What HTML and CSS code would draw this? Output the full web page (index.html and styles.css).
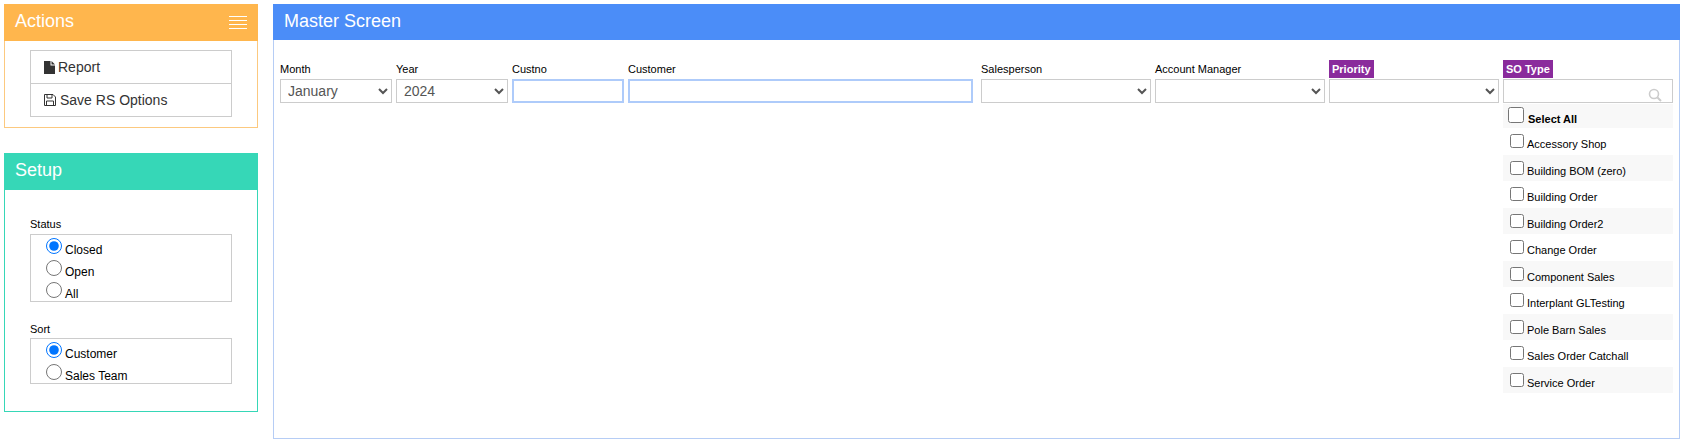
FILE: index.html
```html
<!DOCTYPE html>
<html lang="en">
<head>
<meta charset="utf-8">
<title>Master Screen</title>
<link rel="stylesheet" href="styles.css">
</head>
<body>
<div class="page">
  <aside class="side">
    <section class="panel panel-actions">
      <header class="panel-head">
        <h2>Actions</h2>
        <span class="burger"><i></i><i></i><i></i><i></i></span>
      </header>
      <div class="panel-body">
        <ul class="menu">
          <li>
            <svg class="ic" width="11" height="13" viewBox="0 0 11 13"><path fill="#333" d="M0 0h6.500v4.500H11V13H0z"/><path fill="#333" d="M7.500 0L11 3.500H7.500z"/></svg>
            <span>Report</span>
          </li>
          <li class="save">
            <svg class="ic" width="12" height="12" viewBox="0 0 12 12"><path fill="none" stroke="#333" d="M.5.5h8.500l2.500 2.500v8.500H.5z"/><path fill="none" stroke="#333" d="M3 .5v3.500h5V.5M2.500 11.500V7h7v4.500"/></svg>
            <span>Save RS Options</span>
          </li>
        </ul>
      </div>
    </section>
    <section class="panel panel-setup">
      <header class="panel-head"><h2>Setup</h2></header>
      <div class="panel-body setup-body">
        <div class="group group-first">
          <div class="group-label">Status</div>
          <div class="radio-box box-status">
            <label class="radio"><input type="radio" name="status" checked><span>Closed</span></label>
            <label class="radio"><input type="radio" name="status"><span>Open</span></label>
            <label class="radio"><input type="radio" name="status"><span>All</span></label>
          </div>
        </div>
        <div class="group">
          <div class="group-label">Sort</div>
          <div class="radio-box box-sort">
            <label class="radio"><input type="radio" name="sort" checked><span>Customer</span></label>
            <label class="radio"><input type="radio" name="sort"><span>Sales Team</span></label>
          </div>
        </div>
      </div>
    </section>
  </aside>
  <main class="panel panel-main">
    <header class="panel-head"><h2>Master Screen</h2></header>
    <div class="filters">
      <div class="field f-small">
        <label class="field-label">Month</label>
        <select class="ctl"><option>January</option></select>
      </div>
      <div class="field f-small">
        <label class="field-label">Year</label>
        <select class="ctl"><option>2024</option></select>
      </div>
      <div class="field f-small">
        <label class="field-label">Custno</label>
        <input class="ctl txt" type="text">
      </div>
      <div class="field f-cust">
        <label class="field-label">Customer</label>
        <input class="ctl txt" type="text">
      </div>
      <div class="field f-wide">
        <label class="field-label">Salesperson</label>
        <select class="ctl"><option></option></select>
      </div>
      <div class="field f-wide">
        <label class="field-label">Account Manager</label>
        <select class="ctl"><option></option></select>
      </div>
      <div class="field f-wide">
        <label class="field-label"><span class="tag">Priority</span></label>
        <select class="ctl"><option></option></select>
      </div>
      <div class="field f-wide">
        <label class="field-label"><span class="tag">SO Type</span></label>
        <div class="search">
          <svg class="search-ic" width="14" height="14" viewBox="0 0 14 14"><circle cx="6" cy="6" r="4.500" fill="none" stroke="#ccc" stroke-width="1.600"/><path d="M9.500 9.500L13 13" stroke="#ccc" stroke-width="2"/></svg>
        </div>
        <ul class="checks">
          <li class="all"><label><input type="checkbox"><span>Select All</span></label></li>
          <li><label><input type="checkbox"><span>Accessory Shop</span></label></li>
          <li><label><input type="checkbox"><span>Building BOM (zero)</span></label></li>
          <li><label><input type="checkbox"><span>Building Order</span></label></li>
          <li><label><input type="checkbox"><span>Building Order2</span></label></li>
          <li><label><input type="checkbox"><span>Change Order</span></label></li>
          <li><label><input type="checkbox"><span>Component Sales</span></label></li>
          <li><label><input type="checkbox"><span>Interplant GLTesting</span></label></li>
          <li><label><input type="checkbox"><span>Pole Barn Sales</span></label></li>
          <li><label><input type="checkbox"><span>Sales Order Catchall</span></label></li>
          <li><label><input type="checkbox"><span>Service Order</span></label></li>
        </ul>
      </div>
    </div>
  </main>
</div>
</body>
</html>
```
FILE: styles.css
```css
* { box-sizing: border-box; }
html, body { margin: 0; padding: 0; background: #fff; }
body { font-family: "Liberation Sans", Arial, sans-serif; color: #212529; }
.page { display: flex; gap: 15px; padding: 4px 4px 2px; height: 441px; overflow: hidden; }
.side { width: 254px; flex: none; display: flex; flex-direction: column; gap: 25px; }

.panel { border: 1px solid; background: #fff; }
.panel-head { height: 37px; margin: -1px -1px 0; padding: 0 11px 2px; display: flex; align-items: center; justify-content: space-between; color: #fff; }
.panel-head h2 { margin: 0; font-size: 18px; font-weight: 400; }

.panel-actions { border-color: #fcc97f; height: 124px; }
.panel-actions .panel-head { background: #ffb64d; }
.panel-setup { border-color: #36d7b7; height: 259px; }
.panel-setup .panel-head { background: #36d7b7; }
.panel-main { flex: 1; border-color: #b6cdf5; height: 435px; }
.panel-main .panel-head { background: #4b8df8; height: 36px; }

.burger { display: flex; flex-direction: column; gap: 3px; width: 18px; margin-top: 2px; }
.burger i { display: block; height: 1px; background: #fff; }

.panel-body { padding: 9px 25px 0; }
.menu { list-style: none; margin: 0; padding: 0; border: 1px solid #ccc; width: 202px; }
.menu li { height: 32px; display: flex; align-items: center; gap: 3px; padding-left: 13px; font-size: 14px; color: #333; }
.menu li + li { border-top: 1px solid #ccc; height: 33px; }
.menu .save { gap: 4px; }
.ic { flex: none; }

.setup-body { padding-top: 27px; }
.group-label { font-size: 11px; color: #000; height: 16px; line-height: 14px; }
.group-first .group-label { height: 17px; }
.group + .group { margin-top: 20px; }
.radio-box { width: 202px; border: 1px solid #ccc; padding: 3px 0 0 15px; overflow: hidden; }
.box-status { height: 68px; }
.box-sort { height: 46px; }
.radio { display: flex; align-items: flex-start; height: 22px; font-size: 12px; color: #000; }
.radio input { width: 16px; height: 16px; margin: 0 3px 0 0; flex: none; }
.radio span { padding-top: 5px; line-height: 14px; }

.filters { display: flex; gap: 4px; padding: 19px 6px 0; }
.field { flex: none; display: flex; flex-direction: column; }
.f-small { width: 112px; }
.f-cust { width: 345px; }
.f-wide { width: 170px; }
.f-cust + .f-wide { margin-left: 4px; }
.field-label { height: 20px; display: flex; align-items: center; font-size: 11px; color: #000; }
.tag { background: #8a2b9c; color: #fff; height: 18px; line-height: 18px; padding: 0 3px; font-weight: 700; font-size: 11px; }
.ctl { height: 24px; width: 100%; border: 1px solid #ccc; background: #fff; font-family: "Liberation Sans", Arial, sans-serif; font-size: 14px; color: #555; padding: 0 2px; margin: 0; border-radius: 0; }
select.ctl { padding-left: 3px; }
.txt { border: 2px solid #aecbfa; outline: none; }
.search { position: relative; height: 24px; border: 1px solid #ccc; }
.search-ic { position: absolute; right: 10px; top: 8px; }

.checks { list-style: none; margin: 1px 0 0; padding: 0; font-size: 11px; color: #000; }
.checks li { height: 26.500px; }
.checks li:nth-child(odd) { background: #f8f8f8; }
.checks li label { display: flex; align-items: flex-start; padding: 1px 0 0 7px; }
.checks input { width: 14px; height: 14px; margin: 5px 3px 0 0; flex: none; }
.checks span { padding-top: 9px; line-height: 13px; }
.checks .all { height: 24px; font-weight: 700; }
.checks .all label { padding-left: 5px; }
.checks .all input { width: 16px; height: 16px; margin: 2px 4px 0 0; }
.checks .all span { padding-top: 8px; }
```
